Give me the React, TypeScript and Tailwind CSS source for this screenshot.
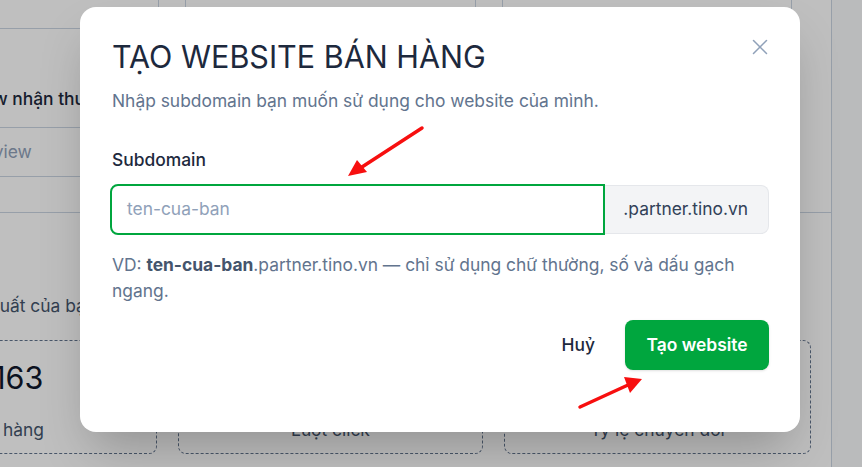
import { X } from 'lucide-react';

const font = { fontFamily: 'Inter, "Noto Sans", sans-serif' };

function Background() {
  return (
    <div className="flex h-full bg-white">
      {/* Main column */}
      <div className="w-[831px] shrink-0 flex flex-col">
        {/* Top cards */}
        <div className="h-[29px] flex">
          <div className="w-[159px] border-b border-r border-slate-300" />
          <div className="w-[26px]" />
          <div className="w-[291px] border-x border-slate-300" />
          <div className="w-[26px]" />
          <div className="w-[290px] border-x border-slate-300" />
        </div>

        {/* Review section */}
        <div className="h-[184px] border-b border-slate-300 flex flex-col">
          <div className="w-[400px] -ml-[52px] mt-[57px] h-[42px] border-b border-slate-300 text-[17.4px] font-medium text-slate-800">
            Review nhận thưởng
          </div>
          <div className="w-[400px] h-[49px] border-b border-slate-300 pt-[11px] text-[17.4px] text-slate-400">
            <span className="-ml-[64px]">Xem review</span>
          </div>
        </div>

        {/* Performance */}
        <div className="flex-1 flex flex-col">
          <div className="-ml-[52px] mt-[80px] text-[17.4px] text-slate-600">Hiệu suất của bạn</div>
          <div className="mt-[21px] -ml-[148px] flex gap-[21px]">
            <div className="w-[305px] h-[114px] rounded-lg border border-dashed border-slate-500 flex flex-col items-center pt-[14px]">
              <div className="text-[30.5px] text-slate-900 pl-[9px]">1.163</div>
              <div className="mt-[16px] text-[17.4px] text-slate-600">Đơn hàng</div>
            </div>
            <div className="w-[305px] h-[114px] rounded-lg border border-dashed border-slate-500 flex flex-col items-center pt-[14px]">
              <div className="text-[30.5px] text-slate-900">4.820</div>
              <div className="mt-[16px] text-[17.4px] text-slate-600">Lượt click</div>
            </div>
            <div className="w-[307px] h-[114px] rounded-lg border border-dashed border-slate-500 flex flex-col items-center pt-[14px]">
              <div className="text-[30.5px] text-slate-900">1,3%</div>
              <div className="mt-[16px] text-[17.4px] text-slate-600">Tỷ lệ chuyển đổi</div>
            </div>
          </div>
        </div>
      </div>

      {/* Right sidebar */}
      <div className="flex-1 border-l border-slate-300 bg-gray-50" />
    </div>
  );
}

function Arrows() {
  return (
    <svg className="absolute inset-0 pointer-events-none" width="862" height="467" viewBox="0 0 862 467">
      <line x1="422" y1="128" x2="362" y2="167" stroke="#f70f0f" strokeWidth="3.5" strokeLinecap="round" />
      <polygon points="348,176 357,160 367,172" fill="#f70f0f" />
      <line x1="580" y1="407" x2="628" y2="385" stroke="#f70f0f" strokeWidth="3.5" strokeLinecap="round" />
      <polygon points="642,379 624,377 630,393" fill="#f70f0f" />
    </svg>
  );
}

export default function App() {
  return (
    <div className="relative w-[862px] h-[467px] overflow-hidden" style={font}>
      <Background />

      {/* Overlay */}
      <div className="absolute inset-0 bg-black/25" />

      {/* Modal */}
      <div className="absolute left-[80px] top-[7px] w-[720px] h-[425px] rounded-2xl bg-white shadow-2xl pl-8 pr-[31px] pt-[30px]">
        <button className="absolute right-[27px] top-[27px] text-slate-400">
          <X size={26} strokeWidth={1.4} />
        </button>

        <h2 className="text-[30.5px] leading-[39px] text-slate-800">TẠO WEBSITE BÁN HÀNG</h2>
        <p className="mt-[12px] text-[17.4px] leading-[26px] text-slate-500">
          Nhập subdomain bạn muốn sử dụng cho website của mình.
        </p>

        <label className="block mt-[33px] text-[17.4px] leading-[26px] font-medium text-slate-800">Subdomain</label>
        <div className="mt-[11px] flex items-center">
          <div className="flex-1 h-[51px] -ml-[2px] rounded-l-lg border-2 border-green-600 flex items-center px-[15px] text-[17.4px] text-slate-400">
            ten-cua-ban
          </div>
          <div className="h-[49px] pl-[18px] pr-[20px] flex items-center rounded-r-lg border border-l-0 border-gray-200 bg-gray-100 text-[17.4px] text-slate-700">
            .partner.tino.vn
          </div>
        </div>

        <p className="mt-[17px] text-[17.4px] leading-[26px] text-slate-500">
          VD: <span className="font-bold text-slate-600">ten-cua-ban</span>.partner.tino.vn — chỉ sử dụng chữ
          thường, số và dấu gạch ngang.
        </p>

        <div className="mt-4 flex items-center justify-end gap-[14px]">
          <button className="px-4 h-[50px] text-[17.4px] font-medium text-slate-800">Huỷ</button>
          <button className="h-[50px] w-[144px] rounded-lg bg-green-600 text-[17.4px] font-semibold text-white shadow-sm">
            Tạo website
          </button>
        </div>
      </div>

      <Arrows />
    </div>
  );
}
